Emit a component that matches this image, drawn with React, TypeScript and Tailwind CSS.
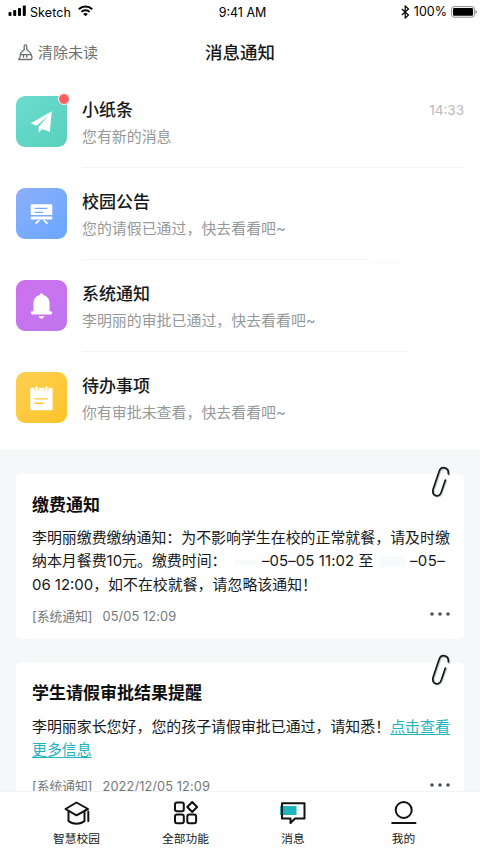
import React from "react";

interface IMessageItem {
  icon: React.ReactNode;
  title: string;
  text: string;
  time?: string;
  unread?: boolean;
  boxClasses: string;
  lineClasses?: string;
}

const PlaneIcon: React.FC = () => (
  <svg width="52" height="52" viewBox="0 0 52 52" fill="#fff">
    <path d="M36.5 15 15 27.200l6 2.600L32.500 20 23 31l.2 5.800 3.600-3.600 7.700 3z" />
  </svg>
);

const BoardIcon: React.FC = () => (
  <svg width="52" height="52" viewBox="0 0 52 52" fill="none">
    <path d="M15 17a1 1 0 0 1 1-1h20a1 1 0 0 1 1 1v10H15z" fill="#fff" />
    <rect x="15" y="28.500" width="22" height="3" rx="1" fill="#fff" />
    <path
      d="m23.300 32.800-2.800 2.600M28.800 32.800l2.800 2.600"
      stroke="#fff"
      strokeWidth="1.800"
      strokeLinecap="round"
    />
    <path d="M19 20.300h13M19 24.300h8.500" stroke="#7ca9fc" strokeWidth="1.300" />
  </svg>
);

const BellIcon: React.FC = () => (
  <svg width="52" height="52" viewBox="0 0 52 52" fill="#fff">
    <path d="M26 13c1 0 1.700.8 1.700 1.800 4.200.9 6.500 4.200 6.500 8.300v8.300h1.200a1.600 1.600 0 0 1 0 3.200H16.600a1.600 1.600 0 0 1 0-3.200h1.200v-8.300c0-4.100 2.300-7.400 6.500-8.300 0-1 .7-1.800 1.700-1.800z" />
    <path d="M23.200 36.200h5.600c-.4 1.700-1.400 2.600-2.800 2.600s-2.400-.9-2.800-2.600z" />
  </svg>
);

const TodoIcon: React.FC = () => (
  <svg width="52" height="52" viewBox="0 0 52 52" fill="none">
    <rect x="14.500" y="15.500" width="22.800" height="23" rx="1.200" fill="#fff" />
    <path d="M21 14.500v4M31 14.500v4" stroke="#fdcb3c" strokeWidth="4.200" />
    <path
      d="M21 15.200v3M31 15.200v3"
      stroke="#fff"
      strokeWidth="2.400"
      strokeLinecap="round"
    />
    <path
      d="M19.300 26.900h12.800M19.300 31.400h8.500"
      stroke="#fdc835"
      strokeWidth="1.400"
      strokeLinecap="round"
    />
  </svg>
);

const messageList: IMessageItem[] = [
  {
    icon: <PlaneIcon />,
    title: "小纸条",
    text: "您有新的消息",
    time: "14:33",
    unread: true,
    boxClasses: "from-[#6bdccf] to-[#58d0bd]",
    lineClasses: "w-[381px]",
  },
  {
    icon: <BoardIcon />,
    title: "校园公告",
    text: "您的请假已通过，快去看看吧~",
    boxClasses: "from-[#8caefa] to-[#69a7ff]",
    lineClasses:
      "w-[286px] relative after:absolute after:left-[289px] after:top-[3px] after:h-px after:w-[33px] after:bg-[#f7f8f8]",
  },
  {
    icon: <BellIcon />,
    title: "系统通知",
    text: "李明丽的审批已通过，快去看看吧~",
    boxClasses: "from-[#cf70ee] to-[#bd77ef]",
    lineClasses: "w-[325px]",
  },
  {
    icon: <TodoIcon />,
    title: "待办事项",
    text: "你有审批未查看，快去看看吧~",
    boxClasses: "from-[#ffd051] to-[#fbc424]",
  },
];

const App: React.FC = () => {
  return (
    <main className="w-[480px] h-[853px] flex flex-col overflow-hidden bg-white text-[#17191a] whitespace-nowrap font-['Inter','Noto_Sans_CJK_SC',sans-serif]">
      <StatusBar />
      <header className="h-[56px] shrink-0 grid grid-cols-3 items-center pl-[17px] pr-[17px]">
        <div className="flex items-center gap-[5px] text-[#6b7172]">
          <BrushIcon />
          <span className="text-[15px] leading-6">清除未读</span>
        </div>
        <h1 className="text-center text-[17.500px] leading-6 font-medium">
          消息通知
        </h1>
      </header>

      <ul className="h-[369px] shrink-0 pt-[16px] pl-4">
        {messageList.map((item) => (
          <MessageRow key={item.title} {...item} />
        ))}
      </ul>

      <section className="flex-1 min-h-0 overflow-hidden bg-[#f4f8f9] px-4 pt-[24px] space-y-[23px]">
        <NoticeCard title="缴费通知" date="05/05 12:09">
          <p>李明丽缴费缴纳通知：为不影响学生在校的正常就餐，请及时缴</p>
          <p className="flex">
            <span className="w-[202px]">纳本月餐费10元。缴费时间：</span>
            <span className="w-[23px] h-[5px] mt-[10px] rounded-full bg-[#f8fbfb]" />
            <span className="w-[122px] pl-[5px] tracking-[0.1px]">
              –05–05 11:02 至
            </span>
            <span className="w-[27px] h-[11px] mt-[6px] rounded bg-[#f8fbfb]" />
            <span className="pl-[4px] tracking-[0.4px]">–05–</span>
          </p>
          <p>06 12:00，如不在校就餐，请忽略该通知！</p>
        </NoticeCard>
        <NoticeCard
          title="学生请假审批结果提醒"
          date="2022/12/05 12:09"
          bodyClasses="mt-[11px]"
          footerClasses="mt-[13px]"
        >
          <p>
            李明丽家长您好，您的孩子请假审批已通过，请知悉！
            <NoticeLink>点击查看</NoticeLink>
          </p>
          <p>
            <NoticeLink>更多信息</NoticeLink>
          </p>
        </NoticeCard>
      </section>

      <TabBar />
    </main>
  );
};

const StatusBar: React.FC = () => {
  return (
    <div className="h-[25px] shrink-0 grid grid-cols-[1fr_auto_1fr] items-center pl-2 pr-[3px] text-[12.500px] leading-4 text-black">
      <div className="flex items-center gap-1">
        <svg width="19" height="12" viewBox="0 0 19 12" className="-mt-1">
          <rect x="0.500" y="7" width="3" height="4" rx="1" />
          <rect x="5.200" y="5" width="3" height="6" rx="1" />
          <rect x="10" y="3" width="3" height="8" rx="1" />
          <rect x="14.800" y="0.500" width="3" height="10.500" rx="1" />
        </svg>
        <span className="-ml-px w-[42px] tracking-[0.1px]">Sketch</span>
        <svg
          width="15"
          height="12"
          viewBox="0 0 15 12"
          fill="none"
          stroke="#000"
          className="ml-[2px] -mt-1"
        >
          <path d="M.8 4.200c3.700-3.600 9.700-3.600 13.400 0" strokeWidth="2.200" />
          <path d="M3.400 6.900c2.300-2.200 5.900-2.200 8.200 0" strokeWidth="2" />
          <path
            d="M7.500 11.200 5.200 8.900c1.300-1.200 3.300-1.200 4.600 0z"
            fill="#000"
            stroke="none"
          />
        </svg>
      </div>
      <span>9:41 AM</span>
      <div className="flex items-center justify-end gap-1 -mt-[2px]">
        <svg
          width="9"
          height="14"
          viewBox="0 0 9 14"
          fill="none"
          stroke="#000"
          strokeWidth="1.200"
        >
          <path d="m.8 4 6.700 6-3.300 3V1l3.300 3-6.700 6" />
        </svg>
        <span>100%</span>
        <svg width="26" height="12" viewBox="0 0 26 12">
          <rect
            x="0.600"
            y="0.600"
            width="22.800"
            height="10.600"
            rx="2.600"
            fill="none"
            stroke="#8a8a8a"
          />
          <rect x="2" y="2" width="20" height="7.800" rx="1.200" />
          <path d="M24.500 4v4c.8-.3 1.200-1 1.200-2s-.4-1.700-1.200-2z" fill="#777" />
        </svg>
      </div>
    </div>
  );
};

const BrushIcon: React.FC = () => (
  <svg
    width="16"
    height="17"
    viewBox="0 0 16 17"
    fill="none"
    stroke="#6b7172"
    strokeWidth="1.300"
    strokeLinejoin="round"
    strokeLinecap="round"
    className="-mt-[2px]"
  >
    <path d="M7.200 5.500V2.300c0-1 .5-1.500 1.300-1.500s1.300.5 1.300 1.500v3.200c.3 1.500 4.200 1.800 4.200 5.100H3.400c0-3.300 3.500-3.600 3.800-5.100z" />
    <path d="M3.400 10.600c0 2-.4 3.500-1.600 4.900h12.400c.8-.8 1-2.900-.2-4.900M6.500 11v2.200M9.700 11v2.200" />
  </svg>
);

const MessageRow: React.FC<IMessageItem> = (item) => {
  return (
    <li className="h-[92px] flex">
      <div
        className={`relative w-[51px] h-[51px] mt-[-1px] shrink-0 rounded-[9px] bg-linear-to-br flex items-center justify-center ${item.boxClasses}`}
      >
        {item.icon}
        {item.unread && (
          <span className="absolute -top-[3px] -right-[3px] w-3 h-3 rounded-full bg-[#ff5f62] border border-white" />
        )}
      </div>
      <div className="ml-[15px] pt-px w-[382px]">
        <div className="flex justify-between items-center h-6">
          <h2 className="text-[17px] leading-6 font-medium">{item.title}</h2>
          <span className="text-[13.500px] leading-6 text-[#b9bbbb]">
            {item.time}
          </span>
        </div>
        <p className="mt-[3px] text-[14.930px] leading-6 text-[#969999]">
          {item.text}
        </p>
        {item.lineClasses && (
          <div className={`mt-[18px] h-px bg-[#f4f5f5] ${item.lineClasses}`} />
        )}
      </div>
    </li>
  );
};

interface INoticeCard {
  title: string;
  date: string;
  bodyClasses?: string;
  footerClasses?: string;
  children: React.ReactNode;
}

const NoticeCard: React.FC<INoticeCard> = ({
  title,
  date,
  bodyClasses = "mt-[9.500px]",
  footerClasses = "mt-[8px]",
  children,
}) => {
  return (
    <article className="relative rounded-[5px] bg-white pt-[19px] px-4 pb-[11px]">
      <ClipIcon />
      <h2 className="text-[17px] leading-6 font-bold text-[#0d0e0e]">{title}</h2>
      <div className={`text-[14.930px] leading-[23.700px] ${bodyClasses}`}>
        {children}
      </div>
      <footer
        className={`flex items-center justify-between text-[12.800px] leading-[22px] text-[#737879] ${footerClasses}`}
      >
        <div className="flex gap-[10px]">
          <span>[系统通知]</span>
          <span className="tracking-[0.1px]">{date}</span>
        </div>
        <svg
          width="20"
          height="4"
          viewBox="0 0 20 4"
          fill="#4c5152"
          className="-mt-[5px] -mr-[2px]"
        >
          <circle cx="2" cy="2" r="1.800" />
          <circle cx="10" cy="2" r="1.800" />
          <circle cx="18" cy="2" r="1.800" />
        </svg>
      </footer>
    </article>
  );
};

const NoticeLink: React.FC<{ children: React.ReactNode }> = ({ children }) => (
  <a href="#" className="text-[#20b4bc] underline underline-offset-2">
    {children}
  </a>
);

const ClipIcon: React.FC = () => (
  <svg
    width="20"
    height="34"
    viewBox="0 0 20 34"
    fill="none"
    strokeLinecap="round"
    className="absolute right-[13px] -top-[8px]"
  >
    <path
      d="M18.300 9c.3-7.500-7.500-8.300-9.300-3L3 24c-1.600 7.200 6 8.600 8 2.500l4.300-11.500"
      stroke="#c4c8c8"
      strokeWidth="2"
    />
    <path
      d="M17.400 8c.5-7-7.300-8.500-9.300-2.500L2.100 23.200c-1.600 7.300 6 8.800 8.200 2.800L14.400 14"
      stroke="#17191a"
      strokeWidth="1.700"
    />
  </svg>
);

const tabList = [
  {
    title: "智慧校园",
    icon: (
      <>
        <path d="M12.500 1.500 24 8 12.500 14.300 1.500 8z" />
        <path d="M4.500 10.500v9.500c4 3.500 12 3.500 16 0v-9.500M24.300 10.500v9.500" />
      </>
    ),
  },
  {
    title: "全部功能",
    icon: (
      <>
        <rect x="2" y="1.500" width="8.800" height="8.800" rx="2" />
        <rect x="2" y="13.500" width="8.800" height="8.800" rx="2" />
        <rect x="14.300" y="13.500" width="8.800" height="8.800" rx="2" />
        <path d="m19.200 1 4.900 5-4.900 5-4.900-5z" />
      </>
    ),
  },
  {
    title: "消息",
    linkClasses: "-ml-[3px]",
    icon: (
      <>
        <path d="M0 5h16.500v9H0z" fill="#20b4bc" stroke="none" />
        <path d="M2 2.200h22.500v15.300h-9.500L10.500 22v-4.500H2z" />
      </>
    ),
  },
  {
    title: "我的",
    icon: (
      <>
        <circle cx="12.700" cy="9" r="8" />
        <path d="M1.200 22h23.300" />
      </>
    ),
  },
];

const TabBar: React.FC = () => {
  return (
    <nav className="h-[62px] shrink-0 grid grid-cols-4 px-[22px] pt-[9px] bg-[#fefefe] border-t border-[#f1f3f3]">
      {tabList.map((tab) => (
        <a
          key={tab.title}
          href="#"
          className={`flex flex-col items-center ${tab.linkClasses ?? ""}`}
        >
          <svg
            width="26"
            height="25"
            viewBox="0 0 26 25"
            fill="none"
            stroke="#111"
            strokeWidth="2"
            strokeLinejoin="round"
            strokeLinecap="round"
            className="overflow-visible"
          >
            {tab.icon}
          </svg>
          <span className="mt-[5px] text-[11.700px] leading-4">{tab.title}</span>
        </a>
      ))}
    </nav>
  );
};

export default App;
